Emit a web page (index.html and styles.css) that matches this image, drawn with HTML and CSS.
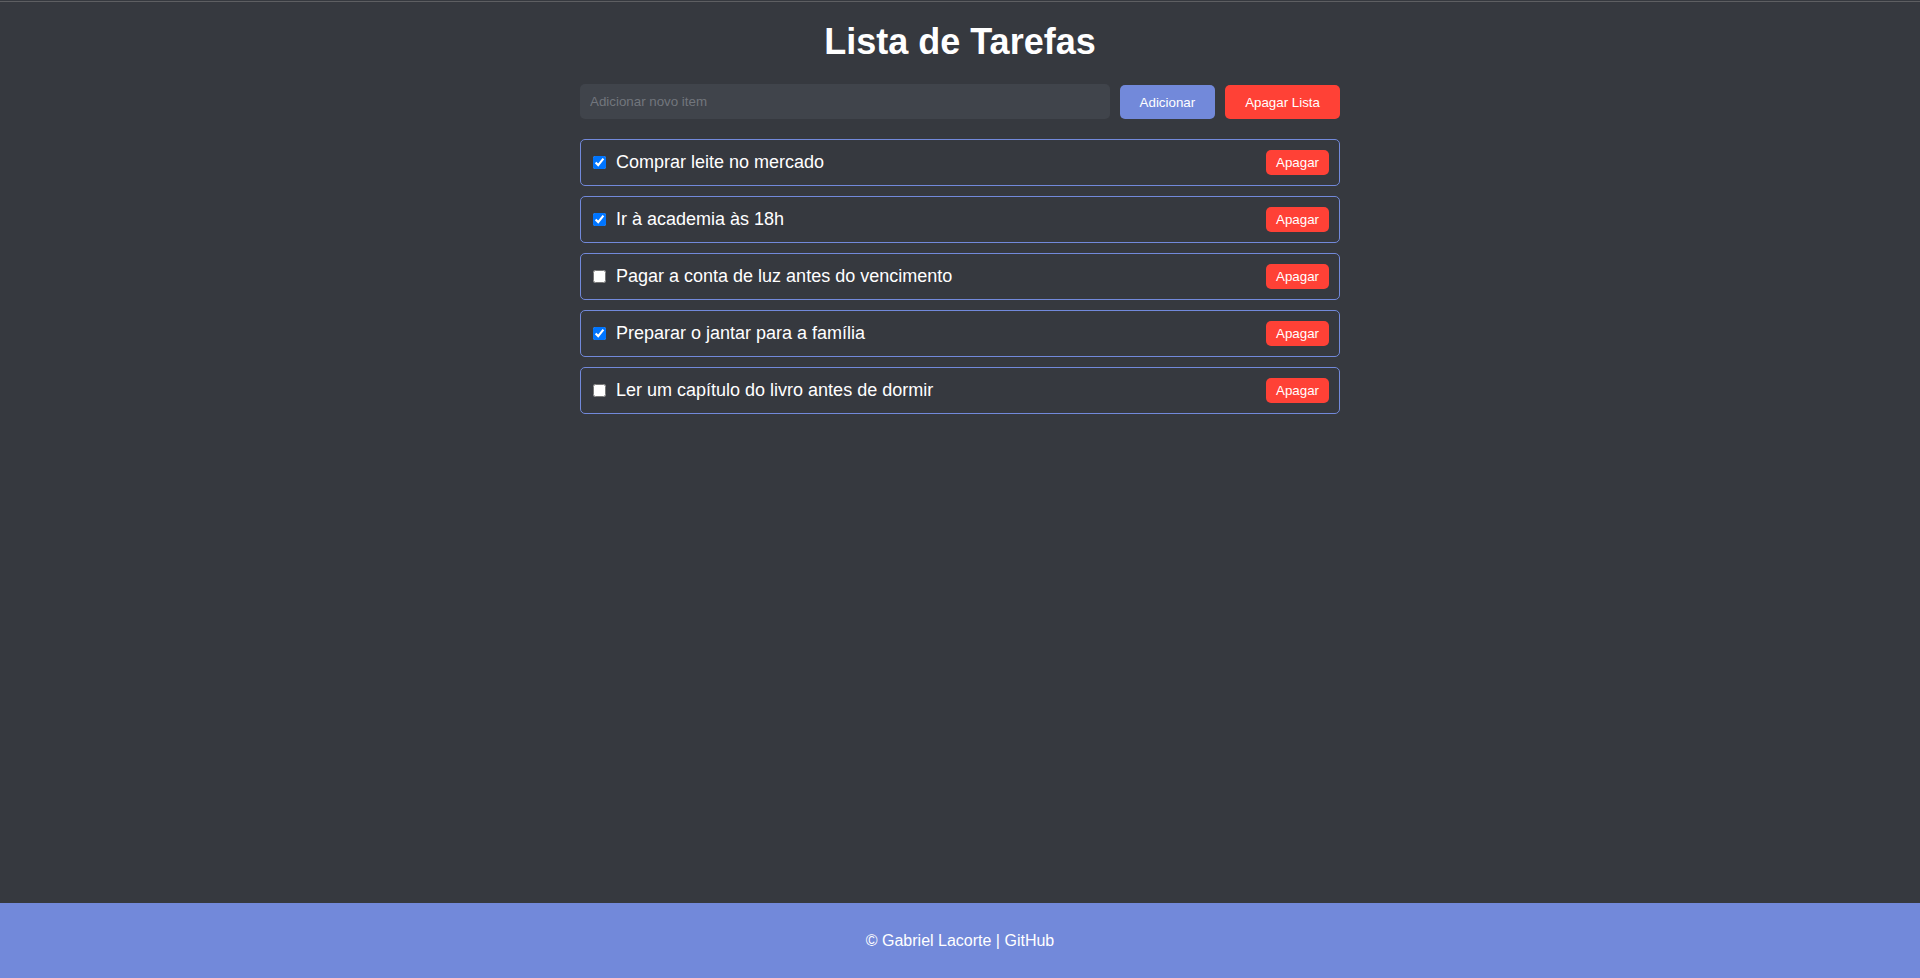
FILE: index.html
```html
<!DOCTYPE html>
<html lang="pt-BR">
<head>
<meta charset="UTF-8">
<title>Lista de Tarefas</title>
<link rel="stylesheet" href="styles.css">
</head>
<body>
<div class="topline"></div>
<main class="container">
  <h1 class="title">Lista de Tarefas</h1>
  <div class="form-row">
    <input class="new-item" type="text" placeholder="Adicionar novo item">
    <button class="btn btn-add">Adicionar</button>
    <button class="btn btn-clear">Apagar Lista</button>
  </div>
  <ul class="task-list">
    <li class="task"><input type="checkbox" class="task-check" checked><span class="task-text">Comprar leite no mercado</span><button class="btn-del">Apagar</button></li>
    <li class="task"><input type="checkbox" class="task-check" checked><span class="task-text">Ir à academia às 18h</span><button class="btn-del">Apagar</button></li>
    <li class="task"><input type="checkbox" class="task-check"><span class="task-text">Pagar a conta de luz antes do vencimento</span><button class="btn-del">Apagar</button></li>
    <li class="task"><input type="checkbox" class="task-check" checked><span class="task-text">Preparar o jantar para a família</span><button class="btn-del">Apagar</button></li>
    <li class="task"><input type="checkbox" class="task-check"><span class="task-text">Ler um capítulo do livro antes de dormir</span><button class="btn-del">Apagar</button></li>
  </ul>
</main>
<footer class="footer">
  <p class="footer-text">© Gabriel Lacorte | <a class="footer-link" href="#">GitHub</a></p>
</footer>
</body>
</html>
```
FILE: styles.css
```css
* { box-sizing: border-box; }
html, body { height: 100%; }
body {
  margin: 0;
  background: #36393f;
  color: #ffffff;
  font-family: Arial, "Liberation Sans", sans-serif;
  display: flex;
  flex-direction: column;
  min-height: 100vh;
}
.topline {
  height: 1px;
  margin-top: 1px;
  background: #5e5f62;
  flex: none;
}
.container {
  width: 760px;
  margin: 0 auto;
  flex: 1;
}
.title {
  margin: 19px 0 21px;
  font-size: 36px;
  font-weight: bold;
  text-align: center;
  color: #ffffff;
}
.form-row {
  display: flex;
  gap: 10px;
  align-items: stretch;
  height: 35px;
}
.new-item {
  flex: 1;
  height: 35px;
  border: none;
  border-radius: 5px;
  background: #40444b;
  color: #ffffff;
  padding: 0 10px;
  font-family: Arial, "Liberation Sans", sans-serif;
  font-size: 13.333px;
  outline: none;
}
.new-item::placeholder { color: #72767d; }
.btn {
  border: none;
  border-radius: 5px;
  color: #ffffff;
  padding: 0 20px;
  font-family: Arial, "Liberation Sans", sans-serif;
  font-size: 13.333px;
  cursor: pointer;
  margin-top: 1px;
}
.btn-add { background: #7289da; }
.btn-clear { background: #ff4136; }
.task-list {
  list-style: none;
  margin: 20px 0 0;
  padding: 0;
  display: flex;
  flex-direction: column;
  gap: 10px;
}
.task {
  display: flex;
  align-items: center;
  height: 47px;
  border: 1px solid #7289da;
  border-radius: 5px;
  padding: 0 10px;
}
.task-check {
  width: 13px;
  height: 13px;
  margin: 0 10px 0 2px;
  flex: none;
}
.task-text {
  flex: 1;
  font-size: 18px;
  color: #ffffff;
}
.btn-del {
  background: #ff4136;
  color: #ffffff;
  border: none;
  border-radius: 5px;
  height: 25px;
  padding: 0 10px;
  font-family: Arial, "Liberation Sans", sans-serif;
  font-size: 13.333px;
  cursor: pointer;
}
.footer {
  flex: none;
  height: 75px;
  background: #7289da;
  display: flex;
  align-items: center;
  justify-content: center;
}
.footer-text {
  margin: 0;
  font-size: 16px;
  color: #ffffff;
}
.footer-link {
  color: #ffffff;
  text-decoration: none;
}
```
